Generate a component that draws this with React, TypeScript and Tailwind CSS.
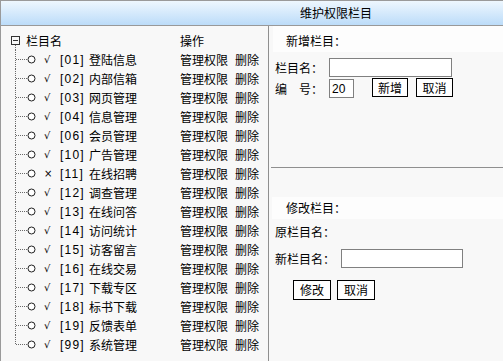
const rows: [string, string, boolean][] = [
  ['01', '登陆信息', true],
  ['02', '内部信箱', true],
  ['03', '网页管理', true],
  ['04', '信息管理', true],
  ['06', '会员管理', true],
  ['10', '广告管理', true],
  ['11', '在线招聘', false],
  ['12', '调查管理', true],
  ['13', '在线问答', true],
  ['14', '访问统计', true],
  ['15', '访客留言', true],
  ['16', '在线交易', true],
  ['17', '下载专区', true],
  ['18', '标书下载', true],
  ['19', '反馈表单', true],
  ['99', '系统管理', true],
]

const font = { fontFamily: '"Noto Sans CJK SC", "Liberation Sans", sans-serif' }

function TreeBranch({ last }: { last: boolean }) {
  return (
    <svg width="39" height="19" className="shrink-0">
      <line x1="14.5" y1="0" x2="14.5" y2={last ? 10 : 19} stroke="#6a6a6a" strokeDasharray="1 1" />
      <line x1="15" y1="9.5" x2="27" y2="9.5" stroke="#6a6a6a" strokeDasharray="1 1" />
      <circle cx="30.5" cy="9.5" r="3.5" fill="white" stroke="#222" strokeWidth="1" />
    </svg>
  )
}

function ColumnRow({ code, name, on, last }: { code: string; name: string; on: boolean; last: boolean }) {
  return (
    <div className="flex h-[19px] items-center text-[12px] text-black">
      <TreeBranch last={last} />
      <span className="w-[20px] pl-[4px] text-[10px] leading-none font-['DejaVu_Sans']">{on ? '√' : '×'}</span>
      <span className="w-[29px] font-['Liberation_Sans'] tracking-[1.2px]">[{code}]</span>
      <span className="w-[91px]">{name}</span>
      <span>管理权限</span>
      <span className="ml-[7px]">删除</span>
    </div>
  )
}

function Btn({ label, className = '' }: { label: string; className?: string }) {
  return (
    <button className={`h-[19px] w-[36px] border border-black bg-white text-[12px] leading-none text-black ${className}`}>
      {label}
    </button>
  )
}

export default function App() {
  return (
    <div className="h-[361px] w-[503px] overflow-hidden border-l border-t border-[#9a9a9a] bg-[#f8f8f8] leading-none" style={font}>
      <div className="flex h-[25px] items-center border-b border-[#999] bg-gradient-to-b from-[#eef7fe] to-[#bcdcf9] pl-[299px] text-[12px] text-black">
        维护权限栏目
      </div>
      <div className="flex">
        <div className="w-[268px] border-r border-[#8f8f8f] pt-[5px]">
          <div className="flex h-[19px] items-center text-[12px] text-black">
            <svg width="25" height="19" className="shrink-0">
              <rect x="10.5" y="5.5" width="8" height="8" fill="none" stroke="#333" />
              <line x1="12" y1="9.5" x2="17" y2="9.5" stroke="#333" />
              <line x1="14.5" y1="14" x2="14.5" y2="19" stroke="#6a6a6a" strokeDasharray="1 1" />
            </svg>
            <span className="w-[154px]">栏目名</span>
            <span>操作</span>
          </div>
          {rows.map(([code, name, on], i) => (
            <ColumnRow key={code} code={code} name={name} on={on} last={i === rows.length - 1} />
          ))}
          <div className="h-[20px]" />
        </div>
        <div className="flex flex-1 flex-col text-[12px] text-black">
          <div className="ml-[4px] flex h-[26px] items-center bg-[#fdfdfd] pl-[13px] pt-[4px]">新增栏目：</div>
          <div className="mt-[6px] flex h-[19px] items-center pl-[6px]">
            <span className="w-[54px]">栏目名：</span>
            <input className="h-[19px] w-[123px] border border-[#808080] bg-white" />
          </div>
          <div className="mt-[2px] flex h-[19px] items-center pl-[6px]">
            <span className="w-[54px]">编　号：</span>
            <input
              defaultValue="20"
              className="h-[19px] w-[25px] border border-[#808080] bg-white pl-[2px] text-[12px] font-['Liberation_Sans']"
            />
            <Btn label="新增" className="ml-[18px] -mt-[2px]" />
            <Btn label="取消" className="ml-[8px] -mt-[2px] w-[37px]" />
          </div>
          <div className="ml-[2px] mt-[69px] h-px bg-[#8f8f8f]" />
          <div className="ml-[3px] mt-[29px] flex h-[22px] items-center bg-[#fdfdfd] pl-[14px]">修改栏目：</div>
          <div className="mt-[3px] flex h-[19px] items-center pl-[6px]">原栏目名：</div>
          <div className="mt-[8px] flex h-[19px] items-center pl-[6px]">
            <span className="w-[66px]">新栏目名：</span>
            <input className="h-[19px] w-[122px] border border-[#808080] bg-white" />
          </div>
          <div className="mt-[12px] flex pl-[24px]">
            <Btn label="修改" className="h-[20px] w-[38px]" />
            <Btn label="取消" className="ml-[6px] h-[20px] w-[38px]" />
          </div>
        </div>
      </div>
    </div>
  )
}
